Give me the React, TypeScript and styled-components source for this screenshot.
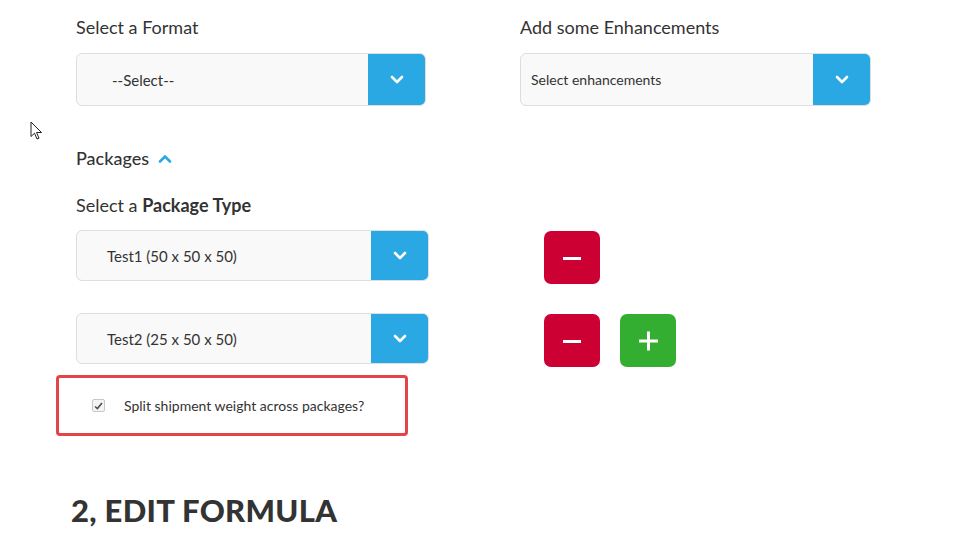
import styled, { createGlobalStyle } from 'styled-components'

const GlobalStyle = createGlobalStyle`
  body {
    margin: 0;
    background: #fff;
    font-family: Lato, "Liberation Sans", sans-serif;
    color: #333;
  }
`

const Page = styled.div`
  position: relative;
  width: 965px;
  height: 535px;
  overflow: hidden;
  padding: 15px 0 0 76px;
  box-sizing: border-box;
`

const TopGrid = styled.div`
  display: grid;
  grid-template-columns: 350px 351px;
  column-gap: 94px;
`

const Field = styled.div`
  display: flex;
  flex-direction: column;
  gap: 14px;
`

const Label = styled.div`
  font-size: 18px;
  line-height: 24px;
  color: #333;
  font-weight: 400;
`

const SelectBox = styled.div<{ $height: number }>`
  display: flex;
  height: ${(p) => p.$height}px;
  border: 1px solid #dedede;
  border-radius: 6px;
  background: #f9f9f9;
  overflow: hidden;
  box-sizing: border-box;
`

const SelectText = styled.div<{ $indent: number; $size: number }>`
  flex: 1;
  display: flex;
  align-items: center;
  padding-left: ${(p) => p.$indent}px;
  font-size: ${(p) => p.$size}px;
  color: #333;
`

const Caret = styled.div`
  width: 57px;
  background: #2aa8e4;
  display: flex;
  align-items: center;
  justify-content: center;
`

const Packages = styled.div`
  margin-top: 40px;
  display: flex;
  align-items: center;
  gap: 9px;
  font-size: 18px;
  line-height: 24px;
  font-weight: 500;
`

const SubLabel = styled(Label)`
  margin-top: 23px;
  b {
    font-weight: 700;
  }
`

const PackageRow = styled.div<{ $top: number }>`
  display: flex;
  align-items: flex-start;
  margin-top: ${(p) => p.$top}px;
`

const PackageSelect = styled.div`
  width: 353px;
`

const Buttons = styled.div`
  display: flex;
  gap: 20px;
  margin-left: 115px;
  margin-top: 1px;
`

const IconButton = styled.button<{ $color: string }>`
  width: 56px;
  height: 53px;
  border: none;
  border-radius: 7px;
  background: ${(p) => p.$color};
  display: flex;
  align-items: center;
  justify-content: center;
  padding: 0;
  cursor: pointer;
`

const Highlight = styled.div`
  margin: 8px 0 0 -20px;
  width: 352px;
  height: 61px;
  box-sizing: border-box;
  border: 3px solid #e34448;
  border-radius: 4px;
  display: flex;
  align-items: center;
  padding-left: 33px;
  gap: 19px;
  font-size: 14px;
  color: #333;
`

const Check = styled.span`
  width: 13px;
  height: 13px;
  box-sizing: border-box;
  border: 1px solid #c8c8c8;
  border-radius: 2px;
  background: #f4f4f4;
  display: flex;
  align-items: center;
  justify-content: center;
`

const Heading = styled.h2`
  margin: 56px 0 0 -5px;
  font-size: 31px;
  line-height: 36px;
  font-weight: 900;
  letter-spacing: 0.3px;
  color: #333;
`

const Pointer = styled.svg`
  position: absolute;
  left: 30px;
  top: 121px;
`

const Chevron = ({ color = '#fff', up = false }: { color?: string; up?: boolean }) => (
  <svg width="14" height="9" viewBox="0 0 14 9">
    <path
      d={up ? 'M2 7.5 L7 2.5 L12 7.5' : 'M2 2 L7 7 L12 2'}
      fill="none"
      stroke={color}
      strokeWidth="2.6"
      strokeLinecap="round"
      strokeLinejoin="round"
    />
  </svg>
)

const Select = ({ text, height, indent, size }: { text: string; height: number; indent: number; size: number }) => (
  <SelectBox $height={height}>
    <SelectText $indent={indent} $size={size}>{text}</SelectText>
    <Caret>
      <Chevron />
    </Caret>
  </SelectBox>
)

const Minus = () => (
  <svg width="20" height="20" viewBox="0 0 20 20">
    <rect x="1" y="9" width="18" height="3" fill="#fff" />
  </svg>
)

const Plus = () => (
  <svg width="20" height="20" viewBox="0 0 20 20">
    <rect x="1" y="8.5" width="19" height="3" fill="#fff" />
    <rect x="9" y="0.5" width="3" height="19" fill="#fff" />
  </svg>
)

const packages = [
  { name: 'Test1 (50 x 50 x 50)', top: 13, add: false },
  { name: 'Test2 (25 x 50 x 50)', top: 29, add: true },
]

export default function App() {
  return (
    <>
      <GlobalStyle />
      <Page>
        <TopGrid>
          <Field>
            <Label>Select a Format</Label>
            <Select text="--Select--" height={53} indent={35} size={15} />
          </Field>
          <Field>
            <Label>Add some Enhancements</Label>
            <Select text="Select enhancements" height={53} indent={10} size={14} />
          </Field>
        </TopGrid>

        <Packages>
          Packages <Chevron color="#2aa8e4" up />
        </Packages>
        <SubLabel>
          Select a <b>Package Type</b>
        </SubLabel>

        {packages.map((pkg) => (
          <PackageRow key={pkg.name} $top={pkg.top}>
            <PackageSelect>
              <Select text={pkg.name} height={51} indent={30} size={15} />
            </PackageSelect>
            <Buttons>
              <IconButton $color="#cc0033" aria-label="Remove package">
                <Minus />
              </IconButton>
              {pkg.add && (
                <IconButton $color="#34ae30" aria-label="Add package">
                  <Plus />
                </IconButton>
              )}
            </Buttons>
          </PackageRow>
        ))}

        <Highlight>
          <Check>
            <svg width="9" height="8" viewBox="0 0 9 8">
              <path d="M1 4.5 L3.4 6.5 L8 1" fill="none" stroke="#5a4a4a" strokeWidth="1.6" />
            </svg>
          </Check>
          Split shipment weight across packages?
        </Highlight>

        <Heading>2, EDIT FORMULA</Heading>

        <Pointer width="13" height="19" viewBox="0 0 13 19">
          <path d="M1 1 L1 15.5 L4.5 12.2 L7 18 L9 17.2 L6.6 11.5 L11.5 11.5 Z" fill="#fff" stroke="#222" strokeWidth="1" strokeLinejoin="round" />
        </Pointer>
      </Page>
    </>
  )
}
